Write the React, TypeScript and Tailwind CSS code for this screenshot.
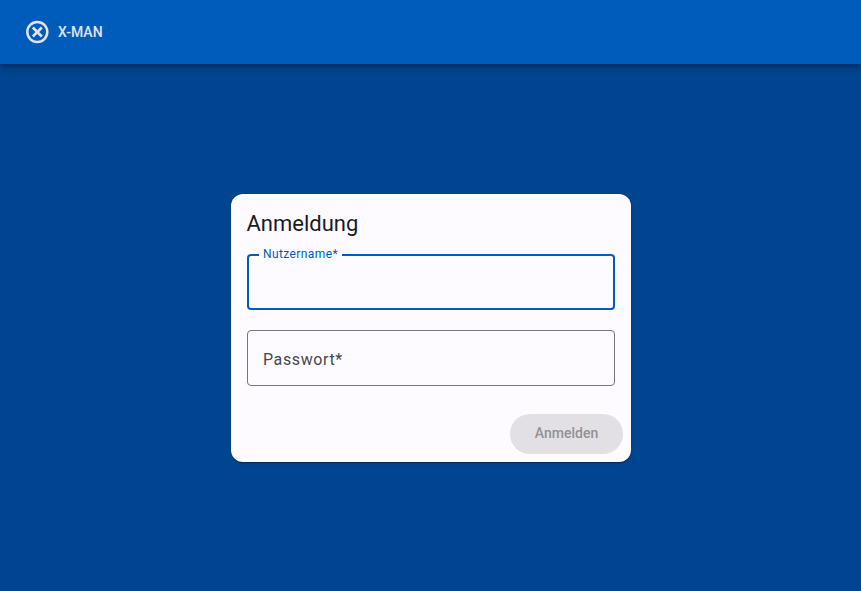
export default function App() {
  return (
    <div className="flex h-[591px] w-full flex-col overflow-hidden bg-[#00458f] font-['Roboto',sans-serif]">
      <header className="z-10 flex h-16 shrink-0 items-center gap-2 bg-[#005cbb] px-[25px] shadow-[0_2px_4px_-1px_rgba(0,0,0,0.2),0_4px_5px_0_rgba(0,0,0,0.14),0_1px_10px_0_rgba(0,0,0,0.12)]">
        <svg className="size-6" viewBox="0 0 24 24" fill="none" stroke="#e3e3e8" strokeWidth="2.5">
          <circle cx="12.3" cy="12" r="10" />
          <path d="M7.8 7.5l9 9M16.8 7.5l-9 9" strokeWidth="2.7" />
        </svg>
        <span className="pl-px text-sm font-medium text-[#e3e3e8]">X-MAN</span>
      </header>
      <main className="flex flex-1 items-center justify-center">
        <form className="flex h-[268px] w-[400px] flex-col rounded-xl bg-[#fdfbff] shadow-[0_2px_1px_-1px_rgba(0,0,0,0.2),0_1px_1px_0_rgba(0,0,0,0.14),0_1px_3px_0_rgba(0,0,0,0.12)]">
          <h1 className="px-4 pt-4 text-[22px] leading-7 text-[#1a1b1f]">Anmeldung</h1>
          <fieldset className="mx-4 mt-[9px] h-[63px] rounded border-2 border-[#005cbb] pl-2.5">
            <legend className="h-4 pr-[3.6px] pl-[4.5px] text-xs leading-[14px] tracking-[0.4px] text-[#005cbb]">Nutzername*</legend>
          </fieldset>
          <div className="mx-4 mt-5 flex h-14 items-center rounded border border-[#74777f] px-[15.5px] pt-1 text-base tracking-[0.6px] text-[#44474e]">Passwort*</div>
          <div className="mt-7 flex justify-end pr-2">
            <button type="button" className="h-10 w-[113px] rounded-full bg-[#e2e0e4] pb-0.5 pl-px text-sm font-medium text-[#929196]">Anmelden</button>
          </div>
        </form>
      </main>
    </div>
  );
}
